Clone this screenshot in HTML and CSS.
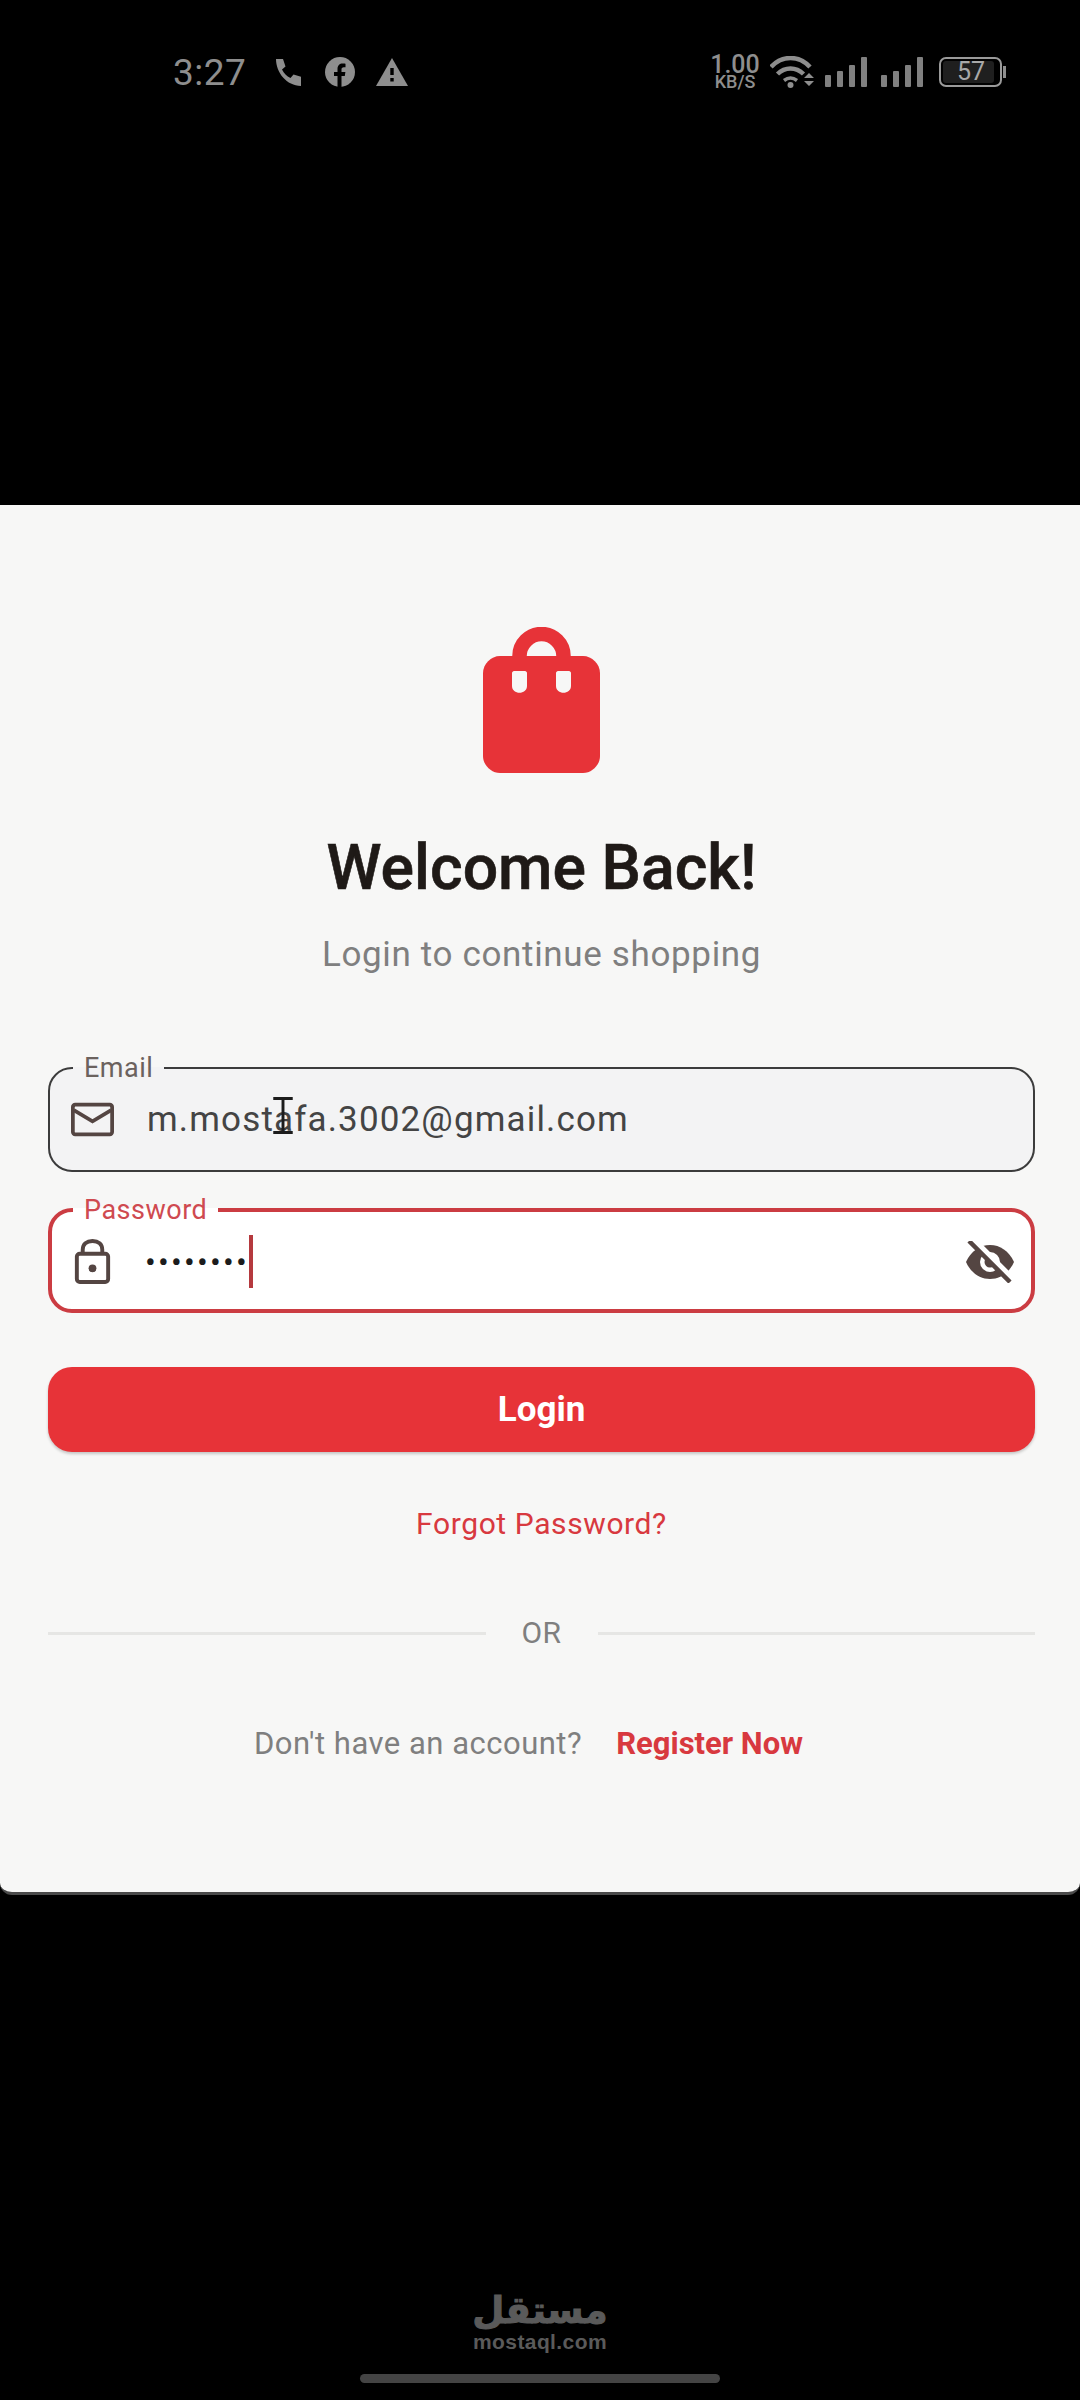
FILE: index.html
```html
<!DOCTYPE html>
<html lang="en">
<head>
    <meta charset="UTF-8">
    <meta name="viewport" content="width=device-width, initial-scale=1.0">
    <title>Login</title>
    <link rel="stylesheet" href="styles.css">
</head>
<body>
    <div class="status-area">
        <div class="status-bar">
            <div class="status-left">
                <span class="clock">3:27</span>
                <svg class="st-icon call" viewBox="0 0 26 27"><path d="M1 0h7l2.500 7.500-3.500 3c2 4 4.500 6.500 8.500 8.500l3-3.500 8 2.500V27C12 27 1 14 1 0z" fill="#8e8e8e"/></svg>
                <svg class="st-icon fb" viewBox="0 0 30 30"><circle cx="15" cy="15" r="15" fill="#8e8e8e"/><path d="M12.500 30V19H9v-4h3.500v-3c0-3.500 2-5.500 5.200-5.500 1.300 0 2.800.2 2.800.2v3.500h-1.700c-1.700 0-2.300 1-2.300 2.100V15h3.900l-.6 4h-3.300v11z" fill="#000"/></svg>
                <svg class="st-icon warn" viewBox="0 0 32 28"><path d="M16 0l16 28H0z" fill="#8e8e8e"/><path d="M14.300 10h3.400v7h-3.400zM14.300 20h3.400v3.500h-3.400z" fill="#000"/></svg>
            </div>
            <div class="status-right">
                <div class="speed"><span class="speed-num">1.00</span><span class="speed-unit">KB/S</span></div>
                <svg class="wifi" viewBox="0 0 44 32">
                    <path d="M1 11C12 -1 29 -1 40 11" fill="none" stroke="#8e8e8e" stroke-width="4.500"/>
                    <path d="M7.500 18C15 10.500 26 10.500 33.500 18" fill="none" stroke="#8e8e8e" stroke-width="4.500"/>
                    <path d="M14 24.500C18 21.500 23 21.500 27 24.500" fill="none" stroke="#8e8e8e" stroke-width="3.500"/>
                    <circle cx="20.500" cy="29" r="3" fill="#8e8e8e"/>
                    <path d="M34 22l5-5 5 5zM34 25h10l-5 5z" fill="#8e8e8e"/>
                </svg>
                <div class="signal">
                    <i class="b1"></i><i class="b2"></i><i class="b3"></i><i class="b4"></i>
                </div>
                <div class="signal">
                    <i class="b1"></i><i class="b2"></i><i class="b3"></i><i class="b4"></i>
                </div>
                <div class="battery"><div class="battery-body"><span class="battery-fill">57</span></div><div class="battery-tip"></div></div>
            </div>
        </div>
    </div>

    <main class="card">
        <svg class="bag" viewBox="0 0 117 146">
            <path d="M36.500 34V29c0-12 10-22 22-22s22 10 22 22v5" fill="none" stroke="#e73338" stroke-width="14.500"/>
            <path d="M17 29h83c9 0 17 8 17 17v83c0 9-8 17-17 17H17c-9 0-17-8-17-17V46c0-9 8-17 17-17z" fill="#e73338"/>
            <path d="M31 44h11c1 0 2 1 2 2v13c0 9-15 9-15 0V46c0-1 1-2 2-2zM75 44h11c1 0 2 1 2 2v13c0 9-15 9-15 0V46c0-1 1-2 2-2z" fill="#f7f7f6"/>
        </svg>
        <h1 class="title">Welcome Back!</h1>
        <p class="subtitle">Login to continue shopping</p>

        <fieldset class="field field-email">
            <legend>Email</legend>
            <svg class="field-icon" viewBox="0 0 46 36"><rect x="2" y="2" width="42" height="32" rx="2.500" fill="none" stroke="#544542" stroke-width="4"/><path d="M3 8l20 12L43 8" fill="none" stroke="#544542" stroke-width="4"/></svg>
            <span class="field-value">m.mostafa.3002@gmail.com</span>
            <svg class="text-cursor" viewBox="0 0 20 38"><path d="M0 1.500h20M0 36.500h20M10 1v36" fill="none" stroke="#1c1c1c" stroke-width="3"/></svg>
        </fieldset>

        <fieldset class="field field-password">
            <legend>Password</legend>
            <svg class="field-icon lock" viewBox="0 0 36 46"><rect x="2" y="15" width="32" height="29" rx="3" fill="none" stroke="#544542" stroke-width="4"/><path d="M8 15v-4C8 5 12 2 18 2s10 3 10 9v4" fill="none" stroke="#544542" stroke-width="4"/><circle cx="18" cy="30" r="4" fill="#544542"/></svg>
            <span class="dots">••••••••</span><span class="caret"></span>
            <svg class="eye-off" viewBox="0 0 50 42">
                <path d="M1 21C6 10 15 4 25 4s19 6 24 17c-5 11-14 17-24 17S6 32 1 21z" fill="#544542"/>
                <circle cx="25" cy="21" r="10" fill="#fff"/>
                <circle cx="25" cy="21" r="5.500" fill="#544542"/>
                <path d="M7 -2l41 41" stroke="#fff" stroke-width="7"/>
                <path d="M4 0l41 41" stroke="#544542" stroke-width="4.500"/>
            </svg>
        </fieldset>

        <button class="login-button">Login</button>
        <a class="forgot">Forgot Password?</a>

        <div class="divider"><span class="rule"></span><span class="or">OR</span><span class="rule"></span></div>

        <div class="register"><span class="register-text">Don't have an account?</span><a class="register-link">Register Now</a></div>
    </main>

    <footer class="bottom">
        <div class="logo-ar" lang="ar" dir="rtl">مستقل</div>
        <div class="logo-en">mostaql.com</div>
        <div class="nav-pill"></div>
    </footer>
</body>
</html>
```

FILE: styles.css
```css
body {
    margin: 0;
    width: 1080px;
    height: 2400px;
    background-color: #000;
    font-family: Roboto, "Noto Sans", sans-serif;
    overflow: hidden;
}

/* status bar */
.status-area {
    height: 505px;
    box-sizing: border-box;
    padding: 52px 74px 0 173px;
}
.status-bar {
    display: flex;
    justify-content: space-between;
    align-items: center;
    height: 40px;
}
.status-left, .status-right {
    display: flex;
    align-items: center;
}
.clock {
    font-size: 37px;
    color: #8e8e8e;
    width: 80px;
    letter-spacing: 0.5px;
}
.st-icon { display: block; }
.call { width: 26px; height: 27px; margin-left: 22px; }
.fb { width: 30px; height: 30px; margin-left: 24px; }
.warn { width: 32px; height: 28px; margin-left: 21px; }
.speed {
    display: flex;
    flex-direction: column;
    align-items: center;
    color: #8e8e8e;
    font-weight: 500;
    width: 48px;
}
.speed-num { font-size: 25px; line-height: 19px; }
.speed-unit { font-size: 18px; line-height: 15px; }
.wifi { width: 44px; height: 32px; margin-left: 11px; }
.signal {
    display: flex;
    align-items: flex-end;
    gap: 6px;
    height: 30px;
    margin-left: 11px;
}
.signal + .signal { margin-left: 14px; }
.signal i {
    display: block;
    width: 6px;
    background-color: #808080;
    border-radius: 1px;
}
.b1 { height: 12px; }
.b2 { height: 16px; }
.b3 { height: 22px; }
.b4 { height: 30px; }
.battery {
    display: flex;
    align-items: center;
    margin-left: 16px;
}
.battery-body {
    width: 63px;
    height: 30px;
    box-sizing: border-box;
    border: 2px solid #9a9a9a;
    border-radius: 7px;
    padding: 2px;
}
.battery-fill {
    display: block;
    width: 37px;
    height: 22px;
    padding-left: 14px;
    background-color: #1f1f1f;
    border-radius: 3px;
    color: #a8a8a8;
    font-size: 25px;
    line-height: 22px;
}
.battery-tip {
    width: 3px;
    height: 12px;
    margin-left: 1px;
    background-color: #8e8e8e;
}

/* login card */
.card {
    height: 1390px;
    box-sizing: border-box;
    padding: 122px 45px 0 48px;
    background-color: #f7f7f6;
    border-radius: 0 0 12px 12px;
    border-bottom: 3px solid #4a4a4a;
    display: flex;
    flex-direction: column;
    align-items: center;
}
.bag {
    width: 117px;
    height: 146px;
    display: block;
}
.title {
    margin: 59px 0 0;
    font-size: 62.5px;
    line-height: 72px;
    font-weight: 500;
    color: #1f1a17;
    -webkit-text-stroke: 0.6px #1f1a17;
}
.subtitle {
    margin: 30px 0 0;
    font-size: 35px;
    line-height: 42px;
    letter-spacing: 0.65px;
    color: #7f7f7f;
}
.field {
    position: relative;
    width: 100%;
    box-sizing: border-box;
    margin: 0;
    display: flex;
    align-items: center;
}
.field legend {
    padding: 0 11px;
    font-size: 27px;
    line-height: 30px;
    letter-spacing: 0.5px;
}
.field-email {
    margin-top: 77px;
    height: 119px;
    padding: 16px 0 0 21px;
    border: 2px solid #3c3c3c;
    border-radius: 24px;
    background-color: #f3f3f4;
}
.field-email legend {
    margin-left: 2px;
    color: #6b625e;
}
.field-password {
    margin-top: 23px;
    height: 118px;
    padding: 10px 0 0 21px;
    border: 4px solid #cb3c42;
    border-radius: 24px;
    background-color: #fff;
}
.field-password legend {
    margin-left: 0;
    color: #cf4a50;
}
.field-icon {
    width: 43px;
    height: 35px;
    flex-shrink: 0;
}
.lock {
    width: 37px;
    height: 45px;
    margin-left: 1px;
}
.field-value {
    margin-left: 33px;
    font-size: 35px;
    letter-spacing: 1.15px;
    color: #444;
}
.text-cursor {
    position: absolute;
    left: 223px;
    top: 14px;
    width: 20px;
    height: 37px;
}
.dots {
    margin-left: 34px;
    font-size: 32px;
    letter-spacing: 2.2px;
    color: #1c1c1c;
}
.caret {
    width: 4px;
    height: 53px;
    background-color: #b5393e;
}
.eye-off {
    width: 50px;
    height: 42px;
    margin-left: auto;
    margin-right: 16px;
}
.login-button {
    display: block;
    width: 100%;
    height: 85px;
    margin-top: 54px;
    border: none;
    border-radius: 24px;
    background-color: #e73338;
    box-shadow: 0 2px 3px rgba(0,0,0,0.2);
    color: #fff;
    font-family: Roboto, sans-serif;
    font-size: 35px;
    font-weight: 700;
}
.forgot {
    margin-top: 50px;
    font-size: 30px;
    line-height: 44px;
    letter-spacing: 0.6px;
    color: #d8393f;
}
.divider {
    width: 100%;
    display: flex;
    align-items: center;
    margin-top: 65px;
}
.rule {
    flex: 1;
    height: 3px;
    background-color: #e6e6e4;
}
.or {
    width: 112px;
    text-align: center;
    font-size: 30px;
    line-height: 44px;
    letter-spacing: 0.5px;
    color: #7f7f7f;
}
.register {
    display: flex;
    align-items: center;
    margin-top: 67px;
    padding-right: 26px;
    gap: 34px;
    font-size: 31px;
    line-height: 44px;
}
.register-text {
    color: #7f7f7f;
    letter-spacing: 0.5px;
}
.register-link {
    color: #d8393f;
    font-weight: 700;
}

/* footer */
.bottom {
    height: 505px;
    box-sizing: border-box;
    padding-top: 396px;
    display: flex;
    flex-direction: column;
    align-items: center;
}
.logo-ar {
    font-family: "DejaVu Sans", sans-serif;
    font-weight: 700;
    font-size: 37px;
    line-height: 40px;
    color: #5a5a5a;
    -webkit-text-stroke: 1px #5a5a5a;
}
.logo-en {
    font-family: "Liberation Sans", sans-serif;
    font-weight: 700;
    font-size: 21px;
    line-height: 22px;
    letter-spacing: 0.4px;
    color: #5a5a5a;
}
.nav-pill {
    width: 360px;
    height: 9px;
    margin-top: 21px;
    border-radius: 5px;
    background-color: #444;
}
```
